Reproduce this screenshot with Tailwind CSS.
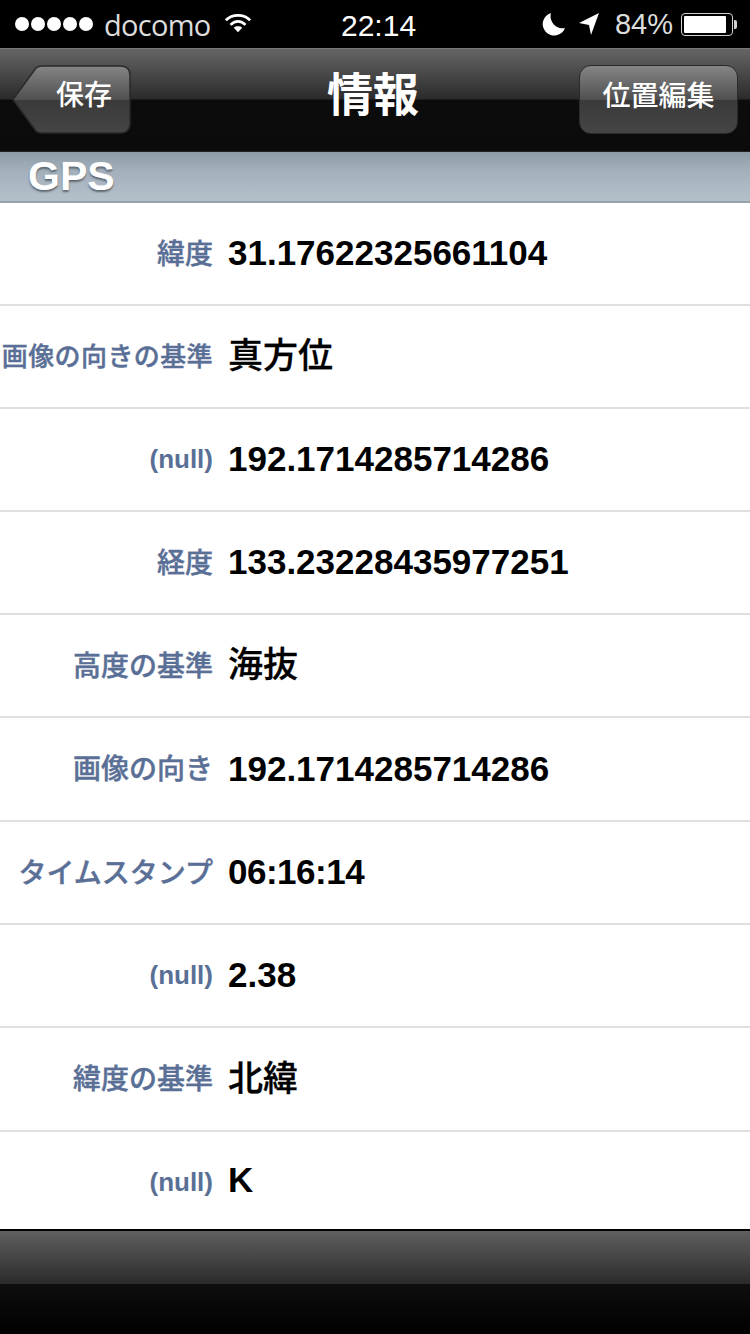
<!DOCTYPE html>
<html lang="ja"><head><meta charset="utf-8"><script src="https://cdn.jsdelivr.net/npm/@tailwindcss/browser@4"></script></head>
<body class="m-0 bg-white">
<div class="w-[750px] h-[1334px] flex flex-col overflow-hidden font-['Liberation_Sans','Noto_Sans_CJK_JP',sans-serif]">
  <div class="h-[48px] bg-black text-[#e8e8e8] flex items-center relative shrink-0">
    <div class="flex gap-[2px] ml-[15px] w-[80px]">
      <span class="w-[14px] h-[14px] rounded-full bg-white"></span><span class="w-[14px] h-[14px] rounded-full bg-white"></span><span class="w-[14px] h-[14px] rounded-full bg-white"></span><span class="w-[14px] h-[14px] rounded-full bg-white"></span><span class="w-[14px] h-[14px] rounded-full bg-white"></span>
    </div>
    <span class="ml-[9px] text-[29px] leading-none font-['Open_Sans'] tracking-[-0.7px] text-[#dcdcdc]">docomo</span>
    <svg class="ml-[13px] mb-[3px]" width="28" height="22" viewBox="0 0 30 22"><path d="M2 8 C9 1 21 1 28 8" fill="none" stroke="#fff" stroke-width="3"/><path d="M7 13 C12 8 18 8 23 13" fill="none" stroke="#fff" stroke-width="3"/><path d="M10.5 16 C13 14 17 14 19.5 16 L15 21 Z" fill="#fff"/></svg>
    <span class="absolute left-[341px] top-[10px] text-[30px] leading-[32px] text-white">22:14</span>
    <div class="ml-auto flex items-center mr-[13px]">
      <svg width="24" height="24" viewBox="0 0 24 24"><path d="M9 1 A11.5 11.5 0 1 0 23 16 A12 12 0 0 1 9 1 Z" fill="#fff"/></svg>
      <svg class="ml-[12px]" width="22" height="24" viewBox="0 0 22 24"><path d="M21 1 L1 11 L11 13 L13 23 Z" fill="#fff"/></svg>
      <span class="ml-[15px] text-[29px] leading-none text-[#dcdcdc]">84%</span>
      <div class="ml-[8px] w-[52px] h-[23px] border border-[#cfcfcf] rounded-[4px] p-[2px]"><div class="w-[42px] h-full bg-white rounded-[1px]"></div></div>
      <div class="ml-[1px] w-[3px] h-[9px] bg-[#cfcfcf] rounded-r-[2px]"></div>
    </div>
  </div>

  <div class="h-[104px] shrink-0 relative flex items-center justify-between border-t border-[#777] border-b border-b-[#222] bg-[linear-gradient(#656565,#2b2b2b_49%,#0c0c0c_50%,#0b0b0b)]">
    <div class="relative ml-[12px] mt-[-2px] w-[119px] h-[69px]">
      <svg class="absolute inset-0" width="119" height="69" viewBox="0 0 119 69">
        <defs><linearGradient id="b1" x1="0" y1="0" x2="0" y2="1"><stop offset="0" stop-color="#858585"/><stop offset=".5" stop-color="#505050"/><stop offset=".51" stop-color="#3a3a3a"/><stop offset="1" stop-color="#454545"/></linearGradient></defs>
        <path d="M1 34.5 L24 3 Q26 1 30 1 L108 1 Q118 1 118 10 L118 58 Q118 68 108 68 L30 68 Q26 68 24 66 Z" fill="url(#b1)" stroke="#2a2a2a" stroke-width="1.5"/>
      </svg>
      <span class="absolute left-[44px] top-[14px] text-[28px] leading-[34px] text-white font-medium">保存</span>
    </div>
    <span class="absolute left-[327px] top-[21px] text-[46px] leading-[50px] font-bold text-white">情報</span>
    <div class="w-[159px] h-[69px] mr-[12px] mt-[-2px] rounded-[12px] border border-[#2a2a2a] bg-[linear-gradient(#858585,#505050_50%,#3a3a3a_51%,#454545)] flex items-center justify-center text-[28px] text-white font-medium pb-[4px]">位置編集</div>
  </div>

  <div class="h-[51px] shrink-0 pl-[28px] flex items-center bg-[linear-gradient(#8e9ca7,#a4b1bc_40%,#b4c0ca)] border-b-2 border-[#98a2aa]">
    <span class="text-[41px] leading-none font-bold text-white [text-shadow:0_2px_2px_#5f6870]">GPS</span>
  </div>

  <div class="flex-1 flex flex-col bg-white">
    <div class="h-[103px] grid grid-cols-[213px_1fr] gap-[15px] items-center border-b-2 border-[#e0e0e0]"><span class="text-right text-[28px] pt-[2px] font-medium [-webkit-text-stroke:0.4px_#5a6f96] text-[#5a6f96]">緯度</span><span class="text-[35px] font-bold text-black">31.17622325661104</span></div>
    <div class="h-[103px] grid grid-cols-[213px_1fr] gap-[15px] items-center border-b-2 border-[#e0e0e0]"><span class="text-right text-[26px] pt-[2px] ml-[-3px] tracking-[0.4px] font-medium [-webkit-text-stroke:0.4px_#5a6f96] text-[#5a6f96]">画像の向きの基準</span><span class="text-[35px] font-medium [-webkit-text-stroke:0.3px_#000] text-black">真方位</span></div>
    <div class="h-[103px] grid grid-cols-[213px_1fr] gap-[15px] items-center border-b-2 border-[#e0e0e0]"><span class="text-right text-[26px] font-bold text-[#5a6f96]">(null)</span><span class="text-[35px] font-bold text-black">192.1714285714286</span></div>
    <div class="h-[103px] grid grid-cols-[213px_1fr] gap-[15px] items-center border-b-2 border-[#e0e0e0]"><span class="text-right text-[28px] pt-[2px] font-medium [-webkit-text-stroke:0.4px_#5a6f96] text-[#5a6f96]">経度</span><span class="text-[35px] font-bold text-black">133.23228435977251</span></div>
    <div class="h-[103px] grid grid-cols-[213px_1fr] gap-[15px] items-center border-b-2 border-[#e0e0e0]"><span class="text-right text-[28px] pt-[2px] font-medium [-webkit-text-stroke:0.4px_#5a6f96] text-[#5a6f96]">高度の基準</span><span class="text-[35px] font-medium [-webkit-text-stroke:0.3px_#000] text-black">海抜</span></div>
    <div class="h-[104px] grid grid-cols-[213px_1fr] gap-[15px] items-center border-b-2 border-[#e0e0e0]"><span class="text-right text-[28px] pt-[2px] font-medium [-webkit-text-stroke:0.4px_#5a6f96] text-[#5a6f96]">画像の向き</span><span class="text-[35px] font-bold text-black">192.1714285714286</span></div>
    <div class="h-[103px] grid grid-cols-[213px_1fr] gap-[15px] items-center border-b-2 border-[#e0e0e0]"><span class="text-right text-[28px] pt-[2px] font-medium [-webkit-text-stroke:0.4px_#5a6f96] text-[#5a6f96]">タイムスタンプ</span><span class="text-[35px] font-bold tracking-[-0.5px] text-black">06:16:14</span></div>
    <div class="h-[103px] grid grid-cols-[213px_1fr] gap-[15px] items-center border-b-2 border-[#e0e0e0]"><span class="text-right text-[26px] font-bold text-[#5a6f96]">(null)</span><span class="text-[35px] font-bold text-black">2.38</span></div>
    <div class="h-[104px] grid grid-cols-[213px_1fr] gap-[15px] items-center border-b-2 border-[#e0e0e0]"><span class="text-right text-[28px] pt-[2px] font-medium [-webkit-text-stroke:0.4px_#5a6f96] text-[#5a6f96]">緯度の基準</span><span class="text-[35px] font-medium [-webkit-text-stroke:0.3px_#000] text-black">北緯</span></div>
    <div class="flex-1 grid grid-cols-[213px_1fr] gap-[15px] items-center"><span class="text-right text-[26px] pt-[4px] font-bold text-[#5a6f96]">(null)</span><span class="text-[35px] font-bold text-black">K</span></div>
  </div>

  <div class="h-[105px] shrink-0 border-t-2 border-black bg-[linear-gradient(#5f5f5f,#2b2b2b_51%,#0e0e0e_51%,#000)]"></div>
</div>
</body></html>
